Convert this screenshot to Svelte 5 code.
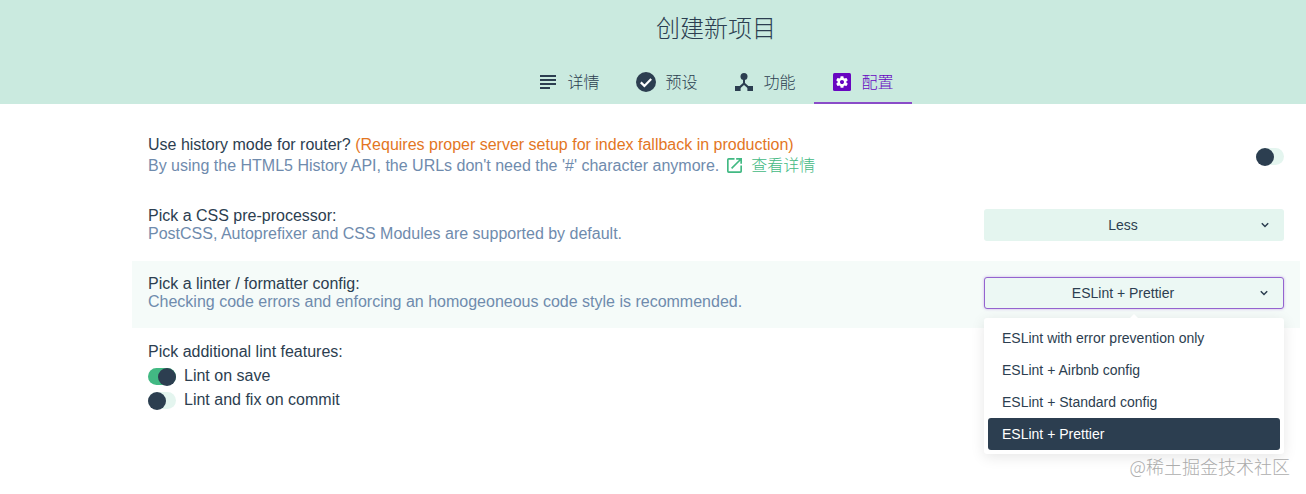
<script lang="ts">
	const TABS = [
		{ id: 'details', label: '详情' },
		{ id: 'presets', label: '预设' },
		{ id: 'features', label: '功能' },
		{ id: 'config', label: '配置' }
	];
	const LINTERS = [
		'ESLint with error prevention only',
		'ESLint + Airbnb config',
		'ESLint + Standard config',
		'ESLint + Prettier'
	];
	let active = 'config';
	let picked = 'ESLint + Prettier';
</script>

<div class="page">
	<header class="head">
		<h1 class="title">创建新项目</h1>
		<nav class="tabs">
			{#each TABS as t (t.id)}
				<button type="button" class="tab" class:active={active === t.id}>
					{#if t.id === 'details'}
						<svg class="ico" viewBox="0 0 20 20"><path d="M2 3h16v2H2zM2 7h16v2H2zM2 11h16v2H2zM2 15h10v2H2z" fill="#2c3e50" /></svg>
					{:else if t.id === 'presets'}
						<svg class="ico" viewBox="2 2 20 20"><circle cx="12" cy="12" r="10" fill="#2c3e50" /><path d="M6.8 12.4l3.6 3.5 6.8-7" fill="none" stroke="#fff" stroke-width="2.2" /></svg>
					{:else if t.id === 'features'}
						<svg class="ico" viewBox="0 0 20 20"><circle cx="10" cy="4.5" r="3.5" fill="#2c3e50" /><path d="M9 6h2v5l5 4.6-1.4 1.5L10 12.9l-4.6 4.2L4 15.6 9 11z" fill="#2c3e50" /><path d="M1 14h5.6v5H1zM13.4 14H19v5h-5.6z" fill="#2c3e50" /></svg>
					{:else}
						<svg class="ico" viewBox="0 0 20 20"><rect x="1" y="1" width="18" height="18" rx="1.5" fill="#6806c1" /><path transform="translate(3 3) scale(.583)" d="M19.43 12.98c.04-.32.07-.64.07-.98s-.03-.66-.07-.98l2.11-1.65c.19-.15.24-.42.12-.64l-2-3.46c-.12-.22-.39-.3-.61-.22l-2.49 1c-.52-.4-1.08-.73-1.69-.98l-.38-2.65C14.46 2.18 14.25 2 14 2h-4c-.25 0-.46.18-.49.42l-.38 2.65c-.61.25-1.17.59-1.69.98l-2.49-1c-.23-.09-.49 0-.61.22l-2 3.46c-.13.22-.07.49.12.64l2.11 1.65c-.04.32-.07.65-.07.98s.03.66.07.98l-2.11 1.65c-.19.15-.24.42-.12.64l2 3.46c.12.22.39.3.61.22l2.49-1c.52.4 1.08.73 1.69.98l.38 2.65c.03.24.24.42.49.42h4c.25 0 .46-.18.49-.42l.38-2.65c.61-.25 1.17-.59 1.69-.98l2.49 1c.23.09.49 0 .61-.22l2-3.46c.12-.22.07-.49-.12-.64l-2.11-1.65zM12 15.5c-1.93 0-3.5-1.57-3.5-3.5s1.57-3.5 3.5-3.5 3.5 1.57 3.5 3.5-1.57 3.5-3.5 3.5z" fill="#fff" /></svg>
					{/if}
					<span class="tab-label">{t.label}</span>
				</button>
			{/each}
		</nav>
	</header>

	<main class="prompts">
		<section class="row first">
			<div class="info">
				<div class="name">Use history mode for router? <span class="warn">(Requires proper server setup for index fallback in production)</span></div>
				<div class="desc">
					By using the HTML5 History API, the URLs don't need the '#' character anymore.
					<span class="more">
						<svg class="ext" viewBox="3 3 18 18"><path d="M19 19H5V5h7V3H5a2 2 0 0 0-2 2v14a2 2 0 0 0 2 2h14a2 2 0 0 0 2-2v-7h-2zM14 3v2h3.6l-9.8 9.8 1.4 1.4L19 6.4V10h2V3z" fill="#42b983" /></svg>
						查看详情
					</span>
				</div>
			</div>
			<span class="switch"><span class="knob"></span></span>
		</section>

		<section class="row second">
			<div class="info">
				<div class="name">Pick a CSS pre-processor:</div>
				<div class="desc">PostCSS, Autoprefixer and CSS Modules are supported by default.</div>
			</div>
			<div class="select">
				<span>Less</span>
				<svg class="chev" viewBox="0 0 24 24"><path d="M6.5 9l5.5 5.5L17.5 9" fill="none" stroke="#2c3e50" stroke-width="2.6" /></svg>
			</div>
		</section>

		<section class="row hl">
			<div class="info">
				<div class="name">Pick a linter / formatter config:</div>
				<div class="desc">Checking code errors and enforcing an homogeoneous code style is recommended.</div>
			</div>
			<div class="select focus">
				<span>{picked}</span>
				<svg class="chev" viewBox="0 0 24 24"><path d="M6.5 9l5.5 5.5L17.5 9" fill="none" stroke="#2c3e50" stroke-width="2.6" /></svg>
			</div>
			<div class="menu">
				{#each LINTERS as l (l)}
					<div class="opt" class:on={l === picked}>{l}</div>
				{/each}
			</div>
		</section>

		<section class="row last">
			<div class="info">
				<div class="name">Pick additional lint features:</div>
				<div class="check"><span class="switch on"><span class="knob"></span></span>Lint on save</div>
				<div class="check"><span class="switch"><span class="knob"></span></span>Lint and fix on commit</div>
			</div>
		</section>
	</main>

	<div class="mark">@稀土掘金技术社区</div>
</div>

<style>
	:global(body) {
		background: #fff;
	}
	.page {
		position: relative;
		width: 1306px;
		height: 494px;
		overflow: hidden;
		color: #2c3e50;
		font-family: 'Liberation Sans', 'Noto Sans CJK SC', sans-serif;
		font-size: 16px;
	}
	.head {
		background: #caeadf;
		height: 104px;
		padding-left: 126px;
		box-sizing: border-box;
		display: flex;
		flex-direction: column;
		align-items: center;
	}
	.title {
		margin: 0;
		padding-top: 10px;
		font-size: 24px;
		font-weight: 300;
		line-height: 34px;
		height: 61px;
		color: #2c3e50;
		font-family: 'Noto Sans CJK SC', sans-serif;
	}
	.tabs {
		display: flex;
		margin-top: -4px;
	}
	.tab {
		width: 98px;
		height: 37px;
		box-sizing: border-box;
		padding: 0 0 5px;
		background: none;
		border: none;
		border-bottom: 2px solid transparent;
		display: flex;
		align-items: center;
		justify-content: center;
		gap: 10px;
		color: #2c3e50;
		font-family: 'Noto Sans CJK SC', sans-serif;
		font-size: 16px;
		font-weight: 300;
	}
	.tab.active {
		color: #6806c1;
		border-bottom-color: #8a4cc8;
	}
	.ico {
		width: 20px;
		height: 20px;
		flex-shrink: 0;
	}
	.tab-label {
		line-height: 20px;
		margin-top: -2px;
		margin-left: -1px;
	}
	.prompts {
		margin-left: 132px;
		width: 1168px;
	}
	.row {
		position: relative;
		display: flex;
		align-items: center;
		justify-content: space-between;
		box-sizing: border-box;
		height: 67px;
		padding: 0 16px 3px;
		line-height: 18px;
	}
	.row.first {
		height: 88px;
		padding: 13px 16px 0;
	}
	.row.first > .switch {
		margin-top: 3px;
	}
	.row.second {
		height: 69px;
		padding-bottom: 4px;
	}
	.row.hl {
		background: #f5fbf9;
	}
	.row.last {
		height: auto;
		padding-top: 15px;
		align-items: flex-start;
	}
	.desc {
		color: #6f8bad;
	}
	.first .name,
	.first .desc {
		line-height: 21px;
		height: 21px;
	}
	.first .desc {
		margin-top: -1px;
	}
	.warn {
		color: #e3761f;
	}
	.more {
		color: #42b983;
		margin-left: 3px;
		font-family: 'Noto Sans CJK SC', sans-serif;
		font-weight: 300;
	}
	.ext {
		width: 15px;
		height: 15px;
		vertical-align: -2px;
		margin-right: 6px;
	}
	.switch {
		position: relative;
		display: inline-block;
		width: 28px;
		height: 17px;
		border-radius: 9px;
		background: #e4f5ef;
		flex-shrink: 0;
	}
	.switch.on {
		background: #42b983;
	}
	.knob {
		position: absolute;
		left: 0;
		top: 0;
		width: 18px;
		height: 18px;
		border-radius: 50%;
		background: #2c3e50;
	}
	.on .knob {
		left: 10px;
	}
	.select {
		width: 300px;
		height: 32px;
		box-sizing: border-box;
		flex-shrink: 0;
		position: relative;
		background: #e4f5ef;
		border-radius: 3px;
		padding-right: 22px;
		display: flex;
		align-items: center;
		justify-content: center;
		font-size: 14px;
	}
	.select.focus {
		border: 1px solid #9464cf;
		box-shadow: 0 0 3px rgba(104, 6, 193, 0.3);
		background: #ecf8f4;
	}
	.chev {
		position: absolute;
		right: 12px;
		top: 50%;
		margin-top: -7px;
		width: 14px;
		height: 14px;
	}
	.menu {
		position: absolute;
		right: 16px;
		top: 57px;
		width: 300px;
		box-sizing: border-box;
		padding: 4px;
		background: #fff;
		border-radius: 3px;
		box-shadow: 0 3px 14px rgba(0, 0, 0, 0.1);
		font-size: 14px;
		z-index: 2;
	}
	.menu::before {
		content: '';
		position: absolute;
		left: 146px;
		top: -4px;
		border: 4px solid transparent;
		border-top: none;
		border-bottom-color: #fff;
	}
	.opt {
		height: 32px;
		line-height: 32px;
		padding: 0 14px;
		border-radius: 3px;
		color: #2c3e50;
	}
	.opt.on {
		background: #2c3e50;
		color: #fff;
	}
	.check {
		display: flex;
		align-items: center;
		gap: 8px;
		height: 24px;
	}
	.last .name {
		margin-bottom: 3px;
	}
	.mark {
		position: absolute;
		right: 16px;
		top: 455px;
		color: #aeaeae;
		font-size: 18px;
		line-height: 22px;
		font-family: 'Noto Sans CJK SC', sans-serif;
		font-weight: 300;
	}
</style>
